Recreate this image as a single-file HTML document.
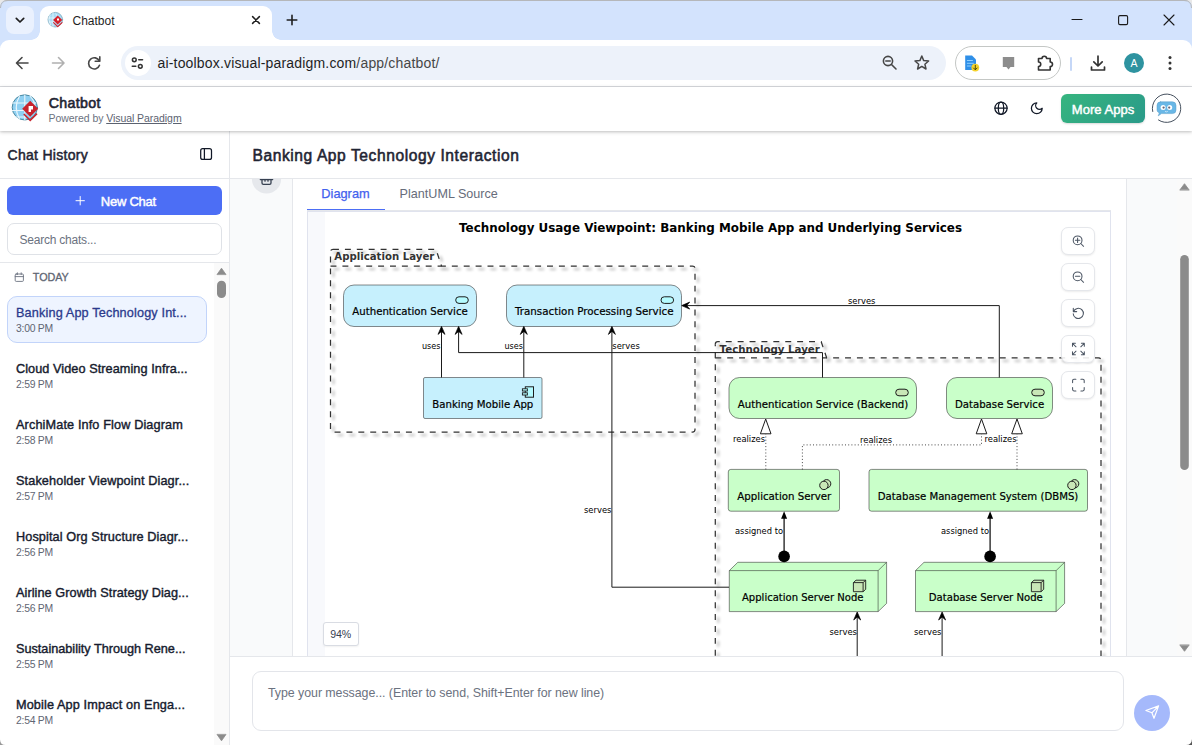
<!DOCTYPE html>
<html lang="en">
<head>
<meta charset="utf-8">
<title>Chatbot</title>
<style>
*{box-sizing:border-box;margin:0;padding:0}
html,body{width:1192px;height:745px;overflow:hidden;background:#fff;font-family:"Liberation Sans",sans-serif;color:#1f2937}
.abs{position:absolute}
#apphead,#appname,#powered,#moreapps,#appsvg{z-index:5}
#win{position:absolute;left:0;top:0;width:1192px;height:745px;overflow:hidden;background:#fff}
/* ---------- browser chrome ---------- */
#tabstrip{left:0;top:0;width:1192px;height:48px;background:#d3e3fd;border-top:1px solid #b5b7ba}
#tab{left:40px;top:6px;width:232px;height:34px;background:#fff;border-radius:9px 9px 0 0}
#tab:before,#tab:after{content:"";position:absolute;bottom:0;width:9px;height:9px}
#tab:before{left:-9px;background:radial-gradient(circle at 0 0,rgba(255,255,255,0) 8.5px,#fff 9px)}
#tab:after{right:-9px;background:radial-gradient(circle at 100% 0,rgba(255,255,255,0) 8.5px,#fff 9px)}
#tabsearch{left:6px;top:6px;width:28px;height:28px;background:#eaf1fe;border-radius:8px}
#tabtitle{left:72.5px;top:14px;font-size:12px;color:#1f1f1f;line-height:14px}
#toolbar{left:0;top:40px;width:1192px;height:46px;background:#fff;border-radius:9px 9px 0 0}
#toolline{left:0;top:86px;width:1192px;height:1px;background:#dadce0}
#omni{left:120.5px;top:46px;width:825.5px;height:34px;border-radius:17px;background:#edf2fa}
#siteinfo{left:125px;top:50px;width:26px;height:26px;border-radius:13px;background:#fff}
#url{left:157.5px;top:54.5px;font-size:14px;line-height:17px;color:#1f1f1f;letter-spacing:.17px}
#url span{color:#474747}
#extpill{left:955px;top:46px;width:106px;height:34px;border-radius:17px;border:1px solid #c4c7c5;background:#fff}
#sepbar{left:1070px;top:57px;width:2px;height:14px;background:#c5d7f7;border-radius:1px}
#avatar{left:1124px;top:53px;width:20px;height:20px;border-radius:10px;background:#2e93a0;color:#fff;font-size:10.5px;text-align:center;line-height:20px}
/* ---------- app header ---------- */
#apphead{left:0;top:87px;width:1192px;height:43.5px;background:#fff;box-shadow:0 1px 4px rgba(0,0,0,.2),0 1px 2px rgba(0,0,0,.08)}
#appname{left:48.7px;top:95px;font-size:14.2px;line-height:16px;color:#1f2433;letter-spacing:.33px;-webkit-text-stroke:.6px #1f2433}
#powered{left:48.5px;top:112px;font-size:10.5px;line-height:12px;color:#6b7280;letter-spacing:-.06px}
#powered u{color:#5b6270}
#moreapps{left:1061px;top:94px;width:84px;height:29px;border-radius:6px;background:linear-gradient(135deg,#36b57f,#2a9a89);color:#fff;font-size:13px;text-align:center;line-height:31px;-webkit-text-stroke:.45px #fff;letter-spacing:.03px;box-shadow:0 1px 2px rgba(0,0,0,.15)}
/* ---------- sidebar ---------- */
#side{left:0;top:131px;width:229px;height:614px;background:#fff}
#sideborder{left:229px;top:131px;width:1px;height:614px;background:#e5e7eb}
#chathist{left:7.5px;top:146.6px;font-size:14px;line-height:17px;color:#1f2433;letter-spacing:.3px;-webkit-text-stroke:.5px #1f2433}
#sideline1{left:0;top:178px;width:229px;height:1px;background:#e5e7eb}
#newchat{left:7px;top:186px;width:215px;height:29px;border-radius:6px;background:#4c6ef5;color:#fff}
#newchat b{position:absolute;left:93.8px;top:8.1px;font-size:13px;line-height:16px;font-weight:400;letter-spacing:-.25px;-webkit-text-stroke:.45px #fff}
#search{left:7px;top:222.5px;width:215px;height:32.2px;border-radius:7px;border:1px solid #dfe2e7;background:#fff}
#search span{position:absolute;left:11.5px;top:9.5px;font-size:12px;line-height:15px;color:#6b7280;letter-spacing:-.22px}
#sideline2{left:0;top:262px;width:229px;height:1px;background:#e5e7eb}
#today{left:32.8px;top:270px;font-size:10.8px;line-height:14px;color:#5f6673;letter-spacing:-.07px;-webkit-text-stroke:.3px #5f6673}
#sel{left:7px;top:295.5px;width:200px;height:47.7px;border-radius:10px;background:#eef4ff;border:1px solid #c2d4fa}
.it{position:absolute;left:16px;font-size:12.7px;line-height:15px;color:#161b2e;white-space:nowrap;letter-spacing:.14px;-webkit-text-stroke:.4px #161b2e}
.tm{position:absolute;left:16px;font-size:10.4px;line-height:12px;color:#5f6673;white-space:nowrap;letter-spacing:-.25px}
#sbar1{left:214px;top:263px;width:15px;height:482px;background:#fafafa}
/* ---------- main ---------- */
#main{left:230px;top:131px;width:962px;height:614px;background:#f9fafb}
#mainhead{left:230px;top:131px;width:962px;height:48px;background:#fff;border-bottom:1px solid #e5e7eb}
#maintitle{left:252.5px;top:145.8px;font-size:15.6px;line-height:20px;color:#1f2433;letter-spacing:.57px;-webkit-text-stroke:.55px #1f2433}
#card{left:292px;top:179px;width:835px;height:478px;background:#fff;border-left:1px solid #e5e7eb;border-right:1px solid #e5e7eb}
#tabsline{left:307px;top:210px;width:804px;height:1px;background:#e5e7eb}
#tabact{left:307px;top:208.7px;width:77.7px;height:1.7px;background:#4c6ef5}
#tabd{left:321.3px;top:186px;font-size:12.8px;line-height:15px;color:#4361ee;-webkit-text-stroke:.25px #4361ee}
#tabp{left:399.6px;top:186.8px;font-size:12.6px;line-height:15px;color:#666c7a}
#dia{left:307px;top:211px;width:804px;height:446px;background:#f8f9fc;border:1px solid #e0e3ee;border-bottom:none;overflow:hidden}
#diawhite{left:325px;top:212px;width:785px;height:445px;background:#fff}
#sbar2{left:1177px;top:179px;width:15px;height:478px;background:#fafafa}
#foot{left:230px;top:656px;width:962px;height:89px;background:#fff;border-top:1px solid #e5e7eb}
#ta{left:252px;top:671px;width:872px;height:59.6px;border:1px solid #e3e5ea;border-radius:9px;background:#fff}
#ta span{position:absolute;left:15px;top:13.9px;font-size:12.4px;line-height:15px;color:#6b7280;letter-spacing:-.05px;white-space:nowrap}
#send{left:1134px;top:695px;width:36px;height:36px;border-radius:18px;background:#a5b9fb}
.zb{position:absolute;left:1061.3px;width:34px;height:28px;border-radius:7px;background:#fff;border:1px solid #e5e7eb;box-shadow:0 1px 2px rgba(0,0,0,.08)}
#pct{left:322.5px;top:622.2px;width:36.2px;height:23.4px;border:1px solid #d9dce3;border-radius:3px;background:#fff;font-size:10.6px;color:#374151;text-align:center;line-height:22.6px;letter-spacing:-.2px;box-shadow:0 1px 2px rgba(0,0,0,.06)}
svg{position:absolute;overflow:visible}
</style>
</head>
<body>
<div id="win">
<!-- browser chrome -->
<div id="tabstrip" class="abs"></div>
<div id="tabsearch" class="abs"></div>
<div id="tab" class="abs"></div>
<div id="tabtitle" class="abs">Chatbot</div>
<div id="toolbar" class="abs"></div>
<div id="toolline" class="abs"></div>
<div id="omni" class="abs"></div>
<div id="siteinfo" class="abs"></div>
<div id="url" class="abs">ai-toolbox.visual-paradigm.com<span>/app/chatbot/</span></div>
<div id="extpill" class="abs"></div>
<div id="sepbar" class="abs"></div>
<div id="avatar" class="abs">A</div>
<!--CHROMEICONS-->
<svg class="abs" width="1192" height="90" viewBox="0 0 1192 90" style="left:0;top:0" fill="none" stroke-linecap="round" stroke-linejoin="round">
<!-- tab search chevron -->
<path d="M16.3,18.3 L20,22 L23.7,18.3" stroke="#1f1f1f" stroke-width="1.7"/>
<!-- favicon -->
<circle cx="55.3" cy="19.7" r="7.3" fill="#a9dcf5" stroke="#7fa9bd" stroke-width="0.8"/>
<path d="M48.5,18 H58 M49,22 H56 M53,12.7 V26.5 M50,14.5 Q47.5,19.5 50.5,25 M56,14 Q58.5,17 58,19" stroke="#e9f6fc" stroke-width="0.8"/>
<path d="M57.7,15.6 L62.3,20 L57.7,24.6 L53.1,20 Z" fill="#d6202a" stroke="none"/>
<path d="M53.6,22.6 L57.7,26.6 L62,22.6" stroke="#d6202a" stroke-width="1.1"/>
<rect x="57" y="18.5" width="2" height="2" fill="#fff" stroke="none"/>
<!-- tab close -->
<path d="M252.6,16.6 L259.4,23.4 M259.4,16.6 L252.6,23.4" stroke="#1f1f1f" stroke-width="1.5"/>
<!-- new tab plus -->
<path d="M287.2,20 H296.8 M292,15.2 V24.8" stroke="#1f1f1f" stroke-width="1.6"/>
<!-- window controls -->
<path d="M1072,19.5 H1082" stroke="#1a1a1a" stroke-width="1.1"/>
<rect x="1118.6" y="15.6" width="9" height="9" rx="1.3" stroke="#1a1a1a" stroke-width="1.1"/>
<path d="M1164,15 L1174,25 M1174,15 L1164,25" stroke="#1a1a1a" stroke-width="1.1"/>
<!-- back -->
<path d="M28,63 H16.8 M22,57.5 L16.5,63 L22,68.5" stroke="#474747" stroke-width="1.6"/>
<!-- forward -->
<path d="M52.5,63 H63.7 M58.5,57.5 L64,63 L58.5,68.5" stroke="#b0b0b0" stroke-width="1.6"/>
<!-- reload -->
<path d="M99.3,61 A5.6,5.6 0 1 0 99.5,65.2" stroke="#474747" stroke-width="1.6"/>
<path d="M99.8,56.7 V61.3 H95.2" stroke="#474747" stroke-width="1.6"/>
<!-- site info -->
<circle cx="134.3" cy="59.8" r="1.9" stroke="#333" stroke-width="1.5"/>
<path d="M138.8,59.8 H142.5" stroke="#333" stroke-width="1.6"/>
<circle cx="140.3" cy="66.3" r="1.9" stroke="#333" stroke-width="1.5"/>
<path d="M132.3,66.3 H135.8" stroke="#333" stroke-width="1.6"/>
<!-- zoom-out magnifier -->
<circle cx="888" cy="61" r="4.6" stroke="#474747" stroke-width="1.6"/>
<path d="M891.5,64.5 L896,69 M885.8,61 H890.2" stroke="#474747" stroke-width="1.6"/>
<!-- star -->
<path d="M921.8,56 L923.7,60.6 L928.6,61 L924.9,64.2 L926,69 L921.8,66.4 L917.6,69 L918.7,64.2 L915,61 L919.9,60.6 Z" stroke="#474747" stroke-width="1.5"/>
<!-- ext 1 : blue doc + yellow badge -->
<path d="M965.2,55.5 H972 L976,59.5 V70 H965.2 Z" fill="#2f8fe8" stroke="none"/>
<path d="M967.3,60.5 H972.5 M967.3,63.3 H973.5 M967.3,66 H971" stroke="#8fd0ff" stroke-width="1"/>
<circle cx="975.3" cy="67.6" r="3.9" fill="#f6d32d" stroke="none"/>
<path d="M975.3,65.3 V69.5 M973.5,68 L975.3,69.8 L977.1,68" stroke="#3b3b00" stroke-width="0.9"/>
<!-- ext 2 : gray bubble -->
<path d="M1002.8,57 H1014.2 V67 H1010.5 L1008.5,69.6 L1006.5,67 H1002.8 Z" fill="#8d8d8d" stroke="none"/>
<!-- puzzle -->
<path d="M1038.5,58.5 H1042 A2.3,2.3 0 0 1 1046.6,58.5 H1050.2 V62 A2.3,2.3 0 0 1 1050.2,66.6 V70 H1038.5 V66.5 A2.2,2.2 0 0 0 1038.5,62 Z" stroke="#333" stroke-width="1.6"/>
<!-- download -->
<path d="M1098,56.2 V65.5 M1093.8,61.8 L1098,66 L1102.2,61.8 M1091.5,67 V70 H1104.5 V67" stroke="#333" stroke-width="1.7"/>
<!-- dots -->
<circle cx="1170" cy="57.6" r="1.5" fill="#333"/><circle cx="1170" cy="63" r="1.5" fill="#333"/><circle cx="1170" cy="68.4" r="1.5" fill="#333"/>
</svg>
<!--/CHROMEICONS-->
<!-- app header -->
<div id="apphead" class="abs"></div>
<div id="appname" class="abs">Chatbot</div>
<div id="powered" class="abs">Powered by <u>Visual Paradigm</u></div>
<div id="moreapps" class="abs">More Apps</div>
<!--APPICONS-->
<svg id="appsvg" class="abs" width="1192" height="50" viewBox="0 86 1192 50" style="left:0;top:86px" fill="none" stroke-linecap="round" stroke-linejoin="round">
<!-- VP logo -->
<circle cx="24.8" cy="107.4" r="12.6" fill="#8fd0f2" stroke="#3f7f96" stroke-width="0.9"/>
<g stroke="#eaf7fd" stroke-width="1.1">
<path d="M12.5,103 H36 M12.3,110.5 H30 M15,117 H27"/>
<path d="M24.8,95 V120 M19.5,96 Q13,107.5 19.5,119 M30,96 Q34.5,101 35,106"/>
</g>
<path d="M30.2,100.8 L38.2,108.8 L30.2,116.8 L22.2,108.8 Z" fill="#c8242e" stroke="none"/>
<path d="M23.8,114 L30.2,120.3 L37,113.6" stroke="#c8242e" stroke-width="1.6" stroke-linejoin="miter" stroke-linecap="butt"/>
<path d="M28.6,106 H33 V109.4 H31 V112 H28.6 Z" fill="#fff" stroke="none" transform="rotate(0 30 109)"/>
<!-- globe -->
<g stroke="#111827" stroke-width="1.25">
<circle cx="1001" cy="108.2" r="6.1"/>
<ellipse cx="1001" cy="108.2" rx="2.7" ry="6.1"/>
<path d="M994.9,108.2 H1007.1"/>
</g>
<!-- moon -->
<path transform="translate(1029.6,101.1) scale(0.6)" d="M12 3a6 6 0 0 0 9 9 9 9 0 1 1-9-9Z" stroke="#111827" stroke-width="2.1"/>
<!-- bot avatar -->
<path d="M1152.7,111.5 A14.2,14.2 0 1 1 1158.5,120" stroke="#2f3b4b" stroke-width="0.9"/>
<path d="M1160.6,101.8 H1172.4 Q1176,101.8 1176,105.4 V110 Q1176,113.6 1172.4,113.6 H1161.5 L1158.2,115.9 L1159.3,112.9 Q1157,112 1157,110 V105.4 Q1157,101.8 1160.6,101.8 Z" fill="#69b7e6" stroke="#5a9cc6" stroke-width="0.5"/>
<circle cx="1163.1" cy="107.4" r="2.5" fill="#fff" stroke="none"/><circle cx="1169.7" cy="107.4" r="2.5" fill="#fff" stroke="none"/>
<circle cx="1163.6" cy="107.6" r="1.15" fill="#667" stroke="none"/><circle cx="1169.2" cy="107.6" r="1.15" fill="#667" stroke="none"/>
<path d="M1165.3,111.6 Q1166.4,112.4 1167.5,111.6" stroke="#d9eefb" stroke-width="0.8"/>
</svg>
<!--/APPICONS-->
<!-- main -->
<div id="main" class="abs"></div>
<div id="card" class="abs"></div>
<div id="tabsline" class="abs"></div>
<div id="tabact" class="abs"></div>
<div id="tabd" class="abs">Diagram</div>
<div id="tabp" class="abs">PlantUML Source</div>
<div id="dia" class="abs"></div>
<div id="diawhite" class="abs"></div>
<!--DIAGRAM-->
<div class="abs" id="diaclip" style="left:308px;top:212px;width:802px;height:445px;overflow:hidden">
<svg width="1192" height="745" viewBox="0 0 1192 745" style="left:-308px;top:-212px" font-family="'DejaVu Sans','Liberation Sans',sans-serif">
<defs>
<filter id="sh" x="-10%" y="-10%" width="125%" height="125%"><feGaussianBlur in="SourceAlpha" stdDeviation="1.6"/><feOffset dx="3.4" dy="3.4"/><feComponentTransfer><feFuncA type="linear" slope="0.42"/></feComponentTransfer><feMerge><feMergeNode/><feMergeNode in="SourceGraphic"/></feMerge></filter>
</defs>
<text x="710.5" y="231.5" font-size="11.9" font-weight="bold" text-anchor="middle" textLength="503" lengthAdjust="spacingAndGlyphs" fill="#000">Technology Usage Viewpoint: Banking Mobile App and Underlying Services</text>
<!-- Application Layer package -->
<g filter="url(#sh)" fill="none" stroke="#333" stroke-width="1.25" stroke-dasharray="5.95 5.95">
<path d="M333,249.3 H436 L441.5,266 H692.5 Q695,266 695,268.5 V429.5 Q695,432 692.5,432 H333 Q330.5,432 330.5,429.5 V251.8 Q330.5,249.3 333,249.3 Z"/>
<path d="M330.5,266 H441.5"/>
</g>
<text x="334.3" y="260.3" font-size="10.2" font-weight="bold" textLength="100" lengthAdjust="spacingAndGlyphs" fill="#333">Application Layer</text>
<!-- Technology Layer package -->
<g filter="url(#sh)" fill="none" stroke="#333" stroke-width="1.25" stroke-dasharray="5.95 5.95">
<path d="M715.3,344.2 Q715.3,341.7 717.8,341.7 H821.2 L826.7,357.9 H1098.5 Q1101,357.9 1101,360.4 V800"/>
<path d="M715.3,344.2 V800" stroke-dashoffset="3.8"/>
<path d="M715.3,357.9 H826.7"/>
</g>
<text x="719.6" y="353" font-size="10.2" font-weight="bold" textLength="100.3" lengthAdjust="spacingAndGlyphs" fill="#333">Technology Layer</text>
<!-- nodes -->
<g stroke="#2b2b2b" stroke-width="0.55">
<rect x="343.5" y="285" width="133" height="41.5" rx="10.5" fill="#c6f0fd"/>
<rect x="506.5" y="285" width="175" height="41.5" rx="10.5" fill="#c6f0fd"/>
<rect x="423.5" y="377.5" width="118.5" height="41" rx="1.5" fill="#c6f0fd"/>
<rect x="729" y="377.5" width="187.5" height="41" rx="10.5" fill="#c9ffc9"/>
<rect x="946.5" y="377.5" width="106" height="41" rx="10.5" fill="#c9ffc9"/>
<rect x="728.3" y="469.4" width="111.2" height="41.8" rx="2.5" fill="#c9ffc9"/>
<rect x="869" y="469.4" width="218.5" height="41.8" rx="2.5" fill="#c9ffc9"/>
<!-- 3D nodes -->
<path d="M729.3,570.6 L737.8,562.3 H886.6 V603.4 L878.1,611.6 H729.3 Z" fill="#c9ffc9"/>
<path d="M729.3,570.6 H878.1 V611.6 M878.1,570.6 L886.6,562.3" fill="none"/>
<path d="M915.5,570.6 L924,562.3 H1064.6 V603.4 L1056.1,611.6 H915.5 Z" fill="#c9ffc9"/>
<path d="M915.5,570.6 H1056.1 V611.6 M1056.1,570.6 L1064.6,562.3" fill="none"/>
</g>
<!-- small icons -->
<g stroke="#1c1c1c" stroke-width="1">
<rect x="455.7" y="296.8" width="12.6" height="6.6" rx="3.3" fill="#b4fbff"/>
<rect x="661" y="296.8" width="12.6" height="6.6" rx="3.3" fill="#b4fbff"/>
<rect x="895.7" y="389.2" width="12.6" height="6.6" rx="3.3" fill="#c9e7b7"/>
<rect x="1031.7" y="389.2" width="12.6" height="6.6" rx="3.3" fill="#c9e7b7"/>
<!-- component icon -->
<rect x="525.3" y="386.8" width="8.2" height="10.4" fill="#b4fbff"/>
<rect x="522.4" y="388.8" width="5" height="2.2" fill="#b4fbff" stroke-width="0.9"/>
<rect x="522.4" y="392.8" width="5" height="2.2" fill="#b4fbff" stroke-width="0.9"/>
<!-- system software icons -->
<circle cx="826.6" cy="483.8" r="4.2" fill="#c9e7b7"/><circle cx="823.9" cy="485.4" r="4.2" fill="#c9e7b7"/>
<circle cx="1074.6" cy="483.8" r="4.2" fill="#c9e7b7"/><circle cx="1071.9" cy="485.4" r="4.2" fill="#c9e7b7"/>
<!-- node icons -->
<path d="M853.4,582.6 L856,580.2 H865.7 V589.3 L863.1,591.7 H853.4 Z M853.4,582.6 H863.1 V591.7 M863.1,582.6 L865.7,580.2" fill="#c9e7b7" stroke-width="0.9"/>
<path d="M1031.4,582.6 L1034,580.2 H1043.7 V589.3 L1041.1,591.7 H1031.4 Z M1031.4,582.6 H1041.1 V591.7 M1041.1,582.6 L1043.7,580.2" fill="#c9e7b7" stroke-width="0.9"/>
</g>
<!-- node labels -->
<g font-size="10.2" fill="#000" stroke="#000" stroke-width=".2">
<text x="352.3" y="314.8" textLength="115.5" lengthAdjust="spacingAndGlyphs">Authentication Service</text>
<text x="515" y="314.8" textLength="158.5" lengthAdjust="spacingAndGlyphs">Transaction Processing Service</text>
<text x="432.3" y="407.8" textLength="101" lengthAdjust="spacingAndGlyphs">Banking Mobile App</text>
<text x="737.8" y="407.8" textLength="170.5" lengthAdjust="spacingAndGlyphs">Authentication Service (Backend)</text>
<text x="954.9" y="407.8" textLength="89.3" lengthAdjust="spacingAndGlyphs">Database Service</text>
<text x="737.3" y="499.8" textLength="94" lengthAdjust="spacingAndGlyphs">Application Server</text>
<text x="877.8" y="499.8" textLength="200.5" lengthAdjust="spacingAndGlyphs">Database Management System (DBMS)</text>
<text x="742" y="600.8" textLength="121.5" lengthAdjust="spacingAndGlyphs">Application Server Node</text>
<text x="928.8" y="600.8" textLength="114" lengthAdjust="spacingAndGlyphs">Database Server Node</text>
</g>
<!-- edges -->
<g fill="none" stroke="#1a1a1a" stroke-width="1">
<path d="M441.5,377.5 V327.5"/>
<path d="M523.8,377.5 V327.5"/>
<path d="M822.5,377.5 V352.6 H458.6 V327.5"/>
<path d="M729,587.2 H611.9 V327.5"/>
<path d="M999.3,377.5 V305.6 H684"/>
<path d="M857.2,656 V614"/>
<path d="M942.1,656 V614"/>
<!-- assigned -->
<path d="M784.1,556 V518" stroke-width="1.3"/><path d="M990.1,556 V518" stroke-width="1.3"/>
<!-- realizes -->
<g stroke-dasharray="1 2.2" stroke-width="0.9" stroke="#333">
<path d="M765.8,469.5 V434"/>
<path d="M802.4,469.5 V444.9 H981.5 V434"/>
<path d="M1017,469.5 V434"/>
</g>
<path d="M765.7,419 L760.4,433.8 H771 Z" fill="#fff"/>
<path d="M981.5,419 L976.2,433.8 H986.8 Z" fill="#fff"/>
<path d="M1017,419 L1011.7,433.8 H1022.3 Z" fill="#fff"/>
</g>
<g fill="#000" stroke="none">
<circle cx="784.1" cy="556.4" r="5.8"/><circle cx="990.1" cy="556.4" r="5.8"/>
<path d="M784.1,511.2 L781.1,518.8 H787.1 Z"/><path d="M990.1,511.2 L987.1,518.8 H993.1 Z"/>
</g>
<g fill="#000" stroke="#000" stroke-width="0.7" stroke-linejoin="miter"><path d="M441.5,326.4 L438.0,334.4 L441.5,331.4 L445.0,334.4 Z"/><path d="M523.8,326.4 L520.3,334.4 L523.8,331.4 L527.3,334.4 Z"/><path d="M458.6,326.4 L455.1,334.4 L458.6,331.4 L462.1,334.4 Z"/><path d="M611.9,326.4 L608.4,334.4 L611.9,331.4 L615.4,334.4 Z"/><path d="M681.7,305.6 L689.7,302.1 L686.7,305.6 L689.7,309.1 Z"/><path d="M857.2,612.0 L853.7,620.0 L857.2,617.0 L860.7,620.0 Z"/><path d="M942.1,612.0 L938.6,620.0 L942.1,617.0 L945.6,620.0 Z"/></g>
<!-- edge labels -->
<g font-size="8.4" fill="#000">
<text x="422" y="348.6" textLength="18.5" lengthAdjust="spacingAndGlyphs">uses</text>
<text x="504.5" y="348.6" textLength="18.5" lengthAdjust="spacingAndGlyphs">uses</text>
<text x="612.3" y="349.2" textLength="27.5" lengthAdjust="spacingAndGlyphs">serves</text>
<text x="584" y="512.6" textLength="27.5" lengthAdjust="spacingAndGlyphs">serves</text>
<text x="848" y="304" textLength="27.5" lengthAdjust="spacingAndGlyphs">serves</text>
<text x="733" y="441.9" textLength="32" lengthAdjust="spacingAndGlyphs">realizes</text>
<text x="860" y="443" textLength="32" lengthAdjust="spacingAndGlyphs">realizes</text>
<text x="984.5" y="441.9" textLength="32" lengthAdjust="spacingAndGlyphs">realizes</text>
<text x="735" y="533.6" textLength="48" lengthAdjust="spacingAndGlyphs">assigned to</text>
<text x="941" y="533.6" textLength="48" lengthAdjust="spacingAndGlyphs">assigned to</text>
<text x="829.5" y="634.9" textLength="27.5" lengthAdjust="spacingAndGlyphs">serves</text>
<text x="914" y="634.9" textLength="27.5" lengthAdjust="spacingAndGlyphs">serves</text>
</g>
</svg>
</div>
<!--/DIAGRAM-->
<!--ZOOMBTNS-->
<div class="zb" style="top:227px"></div><div class="zb" style="top:263px"></div><div class="zb" style="top:299px"></div><div class="zb" style="top:335px;background:rgba(255,255,255,.88)"></div><div class="zb" style="top:371px"></div>
<svg class="abs" width="40" height="180" viewBox="1058 225 40 180" style="left:1058px;top:225px" fill="none" stroke="#4b5563" stroke-width="1.05" stroke-linecap="round" stroke-linejoin="round">
<circle cx="1077.6" cy="240.3" r="4.4"/><path d="M1080.8,243.5 L1083.6,246.3 M1075.4,240.3 H1079.8 M1077.6,238.1 V242.5"/>
<circle cx="1077.6" cy="276.3" r="4.4"/><path d="M1080.8,279.5 L1083.6,282.3 M1075.4,276.3 H1079.8"/>
<path d="M1073.3,308.2 V311.6 H1076.7 M1073.6,311.4 A5.1,5.1 0 1 1 1073.2,313.7"/>
<path d="M1072.5,346.2 V343.3 H1075.4 M1072.7,343.5 L1076,346.8 M1084.3,346.2 V343.3 H1081.4 M1084.1,343.5 L1080.8,346.8 M1072.5,351.8 V354.7 H1075.4 M1072.7,354.5 L1076,351.2 M1084.3,351.8 V354.7 H1081.4 M1084.1,354.5 L1080.8,351.2"/>
<path d="M1072.6,382.6 V380.6 Q1072.6,379.3 1073.9,379.3 H1075.9 M1080.9,379.3 H1082.9 Q1084.2,379.3 1084.2,380.6 V382.6 M1084.2,387.6 V389.6 Q1084.2,390.9 1082.9,390.9 H1080.9 M1075.9,390.9 H1073.9 Q1072.6,390.9 1072.6,389.6 V387.6"/>
</svg>
<!--/ZOOMBTNS-->
<div id="pct" class="abs">94%</div>
<div id="sbar2" class="abs"></div>
<!--MAINEXTRA-->
<svg class="abs" width="962" height="614" viewBox="230 131 962 614" style="left:230px;top:131px" fill="none" stroke-linecap="round" stroke-linejoin="round">
<!-- trash avatar stub -->
<circle cx="266.5" cy="179" r="14.6" fill="#e6e8ec"/>
<path d="M260.3,179.6 H272.7 M262,179.6 V183 Q262,184.4 263.4,184.4 H269.6 Q271,184.4 271,183 V179.6 M265,179.2 V181.2 M268,179.2 V181.2" stroke="#374151" stroke-width="1.3"/>
<!-- scrollbar -->
<path d="M1180,189.8 L1184.5,183.7 L1189,189.8 Z" fill="#8b8b8b" stroke="#8b8b8b" stroke-width="0.8"/>
<rect x="1180.2" y="255" width="8.6" height="215" rx="4.3" fill="#8b8b8b"/>
<path d="M1180,645.2 L1184.5,651.3 L1189,645.2 Z" fill="#8b8b8b" stroke="#8b8b8b" stroke-width="0.8"/>
</svg>
<!--/MAINEXTRA-->
<div id="mainhead" class="abs"></div>
<div id="maintitle" class="abs">Banking App Technology Interaction</div>
<div id="foot" class="abs"></div>
<div id="ta" class="abs"><span>Type your message... (Enter to send, Shift+Enter for new line)</span></div>
<div id="send" class="abs"></div>
<!--SENDICON-->
<svg class="abs" width="36" height="36" viewBox="1134 695 36 36" style="left:1134px;top:695px" fill="none" stroke="#fff" stroke-width="1.2" stroke-linecap="round" stroke-linejoin="round">
<path d="M1158.6,705.9 L1145.9,710.5 L1151.9,712.8 L1154,718.3 Z M1158.6,705.9 L1151.9,712.8"/>
</svg>
<!--/SENDICON-->
<!-- sidebar -->
<div id="side" class="abs"></div>
<div id="sideborder" class="abs"></div>
<div id="chathist" class="abs">Chat History</div>
<div id="sideline1" class="abs"></div>
<div id="newchat" class="abs"><b>New Chat</b></div>
<div id="search" class="abs"><span>Search chats...</span></div>
<div id="sideline2" class="abs"></div>
<div id="sbar1" class="abs"></div>
<div id="today" class="abs">TODAY</div>
<div id="sel" class="abs"></div>
<div class="it" style="top:305.7px;color:#2b3a8c;-webkit-text-stroke:.3px #2b3a8c">Banking App Technology Int...</div><div class="tm" style="top:322.9px">3:00 PM</div>
<div class="it" style="top:361.7px;letter-spacing:0.064px">Cloud Video Streaming Infra...</div><div class="tm" style="top:378.9px">2:59 PM</div>
<div class="it" style="top:417.7px;letter-spacing:0.125px">ArchiMate Info Flow Diagram</div><div class="tm" style="top:434.9px">2:58 PM</div>
<div class="it" style="top:473.7px;letter-spacing:0.12px">Stakeholder Viewpoint Diagr...</div><div class="tm" style="top:490.9px">2:57 PM</div>
<div class="it" style="top:529.7px;letter-spacing:0.1px">Hospital Org Structure Diagr...</div><div class="tm" style="top:546.9px">2:56 PM</div>
<div class="it" style="top:585.7px;letter-spacing:0.07px">Airline Growth Strategy Diag...</div><div class="tm" style="top:602.9px">2:56 PM</div>
<div class="it" style="top:641.7px;letter-spacing:-0.01px">Sustainability Through Rene...</div><div class="tm" style="top:658.9px">2:55 PM</div>
<div class="it" style="top:697.7px;letter-spacing:0.12px">Mobile App Impact on Enga...</div><div class="tm" style="top:714.9px">2:54 PM</div>
<!--SIDEICONS-->
<svg class="abs" width="230" height="614" viewBox="0 131 230 614" style="left:0;top:131px" fill="none" stroke-linecap="round" stroke-linejoin="round">
<!-- collapse icon -->
<rect x="200.7" y="148.7" width="10.8" height="10.7" rx="2" stroke="#111827" stroke-width="1.25"/>
<path d="M204.4,148.7 V159.4" stroke="#111827" stroke-width="1.25"/>
<!-- plus -->
<path d="M76,200.7 H84.4 M80.2,196.5 V204.9" stroke="#fff" stroke-width="1"/>
<!-- calendar -->
<rect x="15.2" y="274" width="8.2" height="7.4" rx="1" stroke="#6b7280" stroke-width="0.9"/>
<path d="M15.2,276.6 H23.4 M17.4,272.8 V274.6 M21.2,272.8 V274.6" stroke="#6b7280" stroke-width="0.9"/>
<!-- scrollbar -->
<path d="M217.2,274.3 L221.5,268.2 L225.8,274.3 Z" fill="#8b8b8b" stroke="#8b8b8b" stroke-width="0.8"/>
<rect x="217" y="280.8" width="9" height="17.2" rx="4.5" fill="#8b8b8b"/>
<path d="M217.2,734.7 L221.5,740.8 L225.8,734.7 Z" fill="#8b8b8b" stroke="#8b8b8b" stroke-width="0.8"/>
</svg>
<!--/SIDEICONS-->
<!--CORNERS-->
<svg class="abs" width="1192" height="745" viewBox="0 0 1192 745" style="left:0;top:0;pointer-events:none" fill="none">
<path d="M0,0 H7 Q0,0.5 0,7 Z" fill="#e9e9e9"/>
<path d="M0.5,8 Q0.5,0.5 8,0.5" stroke="#b5b7ba" stroke-width="1"/>
<path d="M1192,0 H1185 Q1192,0.5 1192,7 Z" fill="#e9e9e9"/>
<path d="M1191.5,8 Q1191.5,0.5 1184,0.5" stroke="#b5b7ba" stroke-width="1"/>
<path d="M0,745 V739.5 Q0.3,745 5.5,745 Z" fill="#999"/>
<path d="M1192,745 V739 Q1191.7,745 1186,745 Z" fill="#555"/>
</svg>
<!--/CORNERS-->
</div>
</body>
</html>
